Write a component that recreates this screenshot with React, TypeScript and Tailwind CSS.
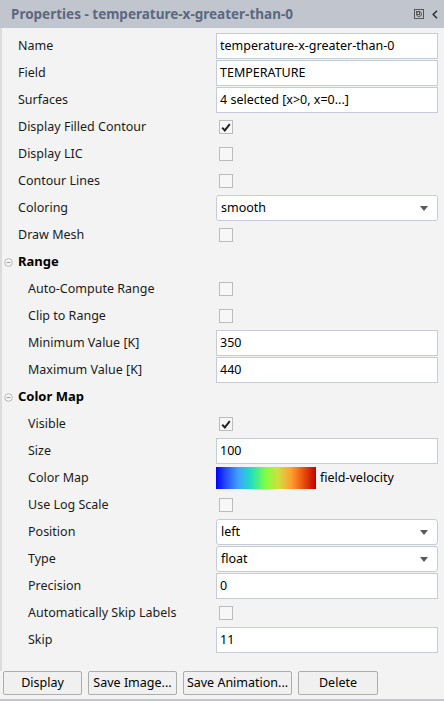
import React from 'react';

const font = { fontFamily: '"Noto Sans", "Open Sans", sans-serif' };

type Row =
  | { kind: 'text'; label: string; value: string; indent?: boolean }
  | { kind: 'check'; label: string; checked?: boolean; indent?: boolean }
  | { kind: 'select'; label: string; value: string; indent?: boolean }
  | { kind: 'colormap'; label: string; value: string; indent?: boolean }
  | { kind: 'section'; label: string };

const rows: Row[] = [
  { kind: 'text', label: 'Name', value: 'temperature-x-greater-than-0' },
  { kind: 'text', label: 'Field', value: 'TEMPERATURE' },
  { kind: 'text', label: 'Surfaces', value: '4 selected [x>0, x=0...]' },
  { kind: 'check', label: 'Display Filled Contour', checked: true },
  { kind: 'check', label: 'Display LIC' },
  { kind: 'check', label: 'Contour Lines' },
  { kind: 'select', label: 'Coloring', value: 'smooth' },
  { kind: 'check', label: 'Draw Mesh' },
  { kind: 'section', label: 'Range' },
  { kind: 'check', label: 'Auto-Compute Range', indent: true },
  { kind: 'check', label: 'Clip to Range', indent: true },
  { kind: 'text', label: 'Minimum Value [K]', value: '350', indent: true },
  { kind: 'text', label: 'Maximum Value [K]', value: '440', indent: true },
  { kind: 'section', label: 'Color Map' },
  { kind: 'check', label: 'Visible', checked: true, indent: true },
  { kind: 'text', label: 'Size', value: '100', indent: true },
  { kind: 'colormap', label: 'Color Map', value: 'field-velocity', indent: true },
  { kind: 'check', label: 'Use Log Scale', indent: true },
  { kind: 'select', label: 'Position', value: 'left', indent: true },
  { kind: 'select', label: 'Type', value: 'float', indent: true },
  { kind: 'text', label: 'Precision', value: '0', indent: true },
  { kind: 'check', label: 'Automatically Skip Labels', indent: true },
  { kind: 'text', label: 'Skip', value: '11', indent: true },
];

function Checkbox({ checked }: { checked?: boolean }) {
  return (
    <div className="ml-[3px] w-[14px] h-[14px] border border-[#bcbcbc] bg-[#f7f7f7] flex items-center justify-center">
      {checked && (
        <svg width="10" height="9" viewBox="0 0 10 9">
          <path d="M1.2 4.6 L3.8 7.4 L8.8 1.2" fill="none" stroke="#222" strokeWidth="2" />
        </svg>
      )}
    </div>
  );
}

function PropRow({ row }: { row: Row }) {
  if (row.kind === 'section') {
    return (
      <div className="h-[26px] mb-px flex items-center">
        <div className="w-[16px] flex items-center justify-center pr-[3px]">
          <svg width="9" height="9" viewBox="0 0 9 9">
            <circle cx="4.5" cy="4.5" r="3.8" fill="#f6f6f6" stroke="#b9b9b9" strokeWidth="1" />
            <path d="M2.6 4.5 H6.4" stroke="#9a9a9a" strokeWidth="1" />
          </svg>
        </div>
        <span className="text-[13px] font-bold text-black">{row.label}</span>
      </div>
    );
  }
  return (
    <div className="h-[26px] mb-px flex items-center">
      <div className={`w-[214px] text-[12.5px] text-[#1b1b1b] ${row.indent ? 'pl-[26px]' : 'pl-[16px]'}`}>
        {row.label}
      </div>
      <div className="flex-1 mr-[6px] h-full flex items-center">
        {row.kind === 'text' && (
          <div className="w-full h-full bg-white border border-[#c5ccd5] flex items-center px-[3px] text-[12.5px] text-black">
            {row.value}
          </div>
        )}
        {row.kind === 'check' && <Checkbox checked={row.checked} />}
        {row.kind === 'select' && (
          <div className="w-full h-full bg-white border border-[#c5ccd5] rounded-[3px] flex items-center justify-between pl-[4px] pr-[9px] text-[12.5px] text-black">
            <span>{row.value}</span>
            <svg width="8" height="5" viewBox="0 0 8 5">
              <path d="M0 0 H8 L4 5 Z" fill="#5a5a5a" />
            </svg>
          </div>
        )}
        {row.kind === 'colormap' && (
          <div className="flex items-center h-full">
            <div className="w-[100px] h-[22px] bg-[linear-gradient(to_right,#0000ff_0%,#2040ff_8%,#40a0ff_22%,#20e0c0_35%,#80ff40_50%,#d0e040_62%,#ffa030_75%,#f06010_85%,#c00000_100%)]" />
            <span className="ml-[4px] text-[12.5px] text-black">{row.value}</span>
          </div>
        )}
      </div>
    </div>
  );
}

function Button({ label, w }: { label: string; w: string }) {
  return (
    <div className={`${w} h-[24px] border border-[#adadad] rounded-[2px] bg-[#f0f0f0] flex items-center justify-center text-[12.5px] text-black`}>
      {label}
    </div>
  );
}

export default function App() {
  return (
    <div style={font} className="w-[444px] h-[701px] bg-[#f3f3f3] flex flex-col overflow-hidden">
      {/* Title bar */}
      <div className="h-[28px] shrink-0 bg-[#c1c6ce] flex items-center pl-[11px] pr-[6px]">
        <span className="flex-1 text-[13.5px] font-bold text-[#5b6880]">Properties - temperature-x-greater-than-0</span>
        <svg width="10" height="10" viewBox="0 0 10 10" className="mr-[8px]">
          <rect x="0.5" y="0.5" width="9" height="9" fill="none" stroke="#555" />
          <circle cx="5" cy="5" r="2.5" fill="none" stroke="#555" />
          <rect x="2.5" y="2.5" width="3" height="3" fill="none" stroke="#555" />
        </svg>
        <svg width="6" height="9" viewBox="0 0 6 9">
          <path d="M5 0.8 L1.2 4.5 L5 8.2" fill="none" stroke="#333" strokeWidth="1.6" />
        </svg>
      </div>

      {/* Properties list */}
      <div className="flex-1 flex flex-col pt-[5px] border-l-2 border-[#dcdcdc]">
        {rows.map((r, i) => (
          <PropRow key={i} row={r} />
        ))}
      </div>

      {/* Buttons */}
      <div className="flex items-center gap-[6px] pl-[3px] pb-[4px]">
        <Button label="Display" w="w-[79px]" />
        <Button label="Save Image..." w="w-[89px]" />
        <Button label="Save Animation..." w="w-[109px]" />
        <Button label="Delete" w="w-[80px]" />
      </div>
      <div className="h-[2px] bg-[#c1c6ce] shrink-0" />
    </div>
  );
}
